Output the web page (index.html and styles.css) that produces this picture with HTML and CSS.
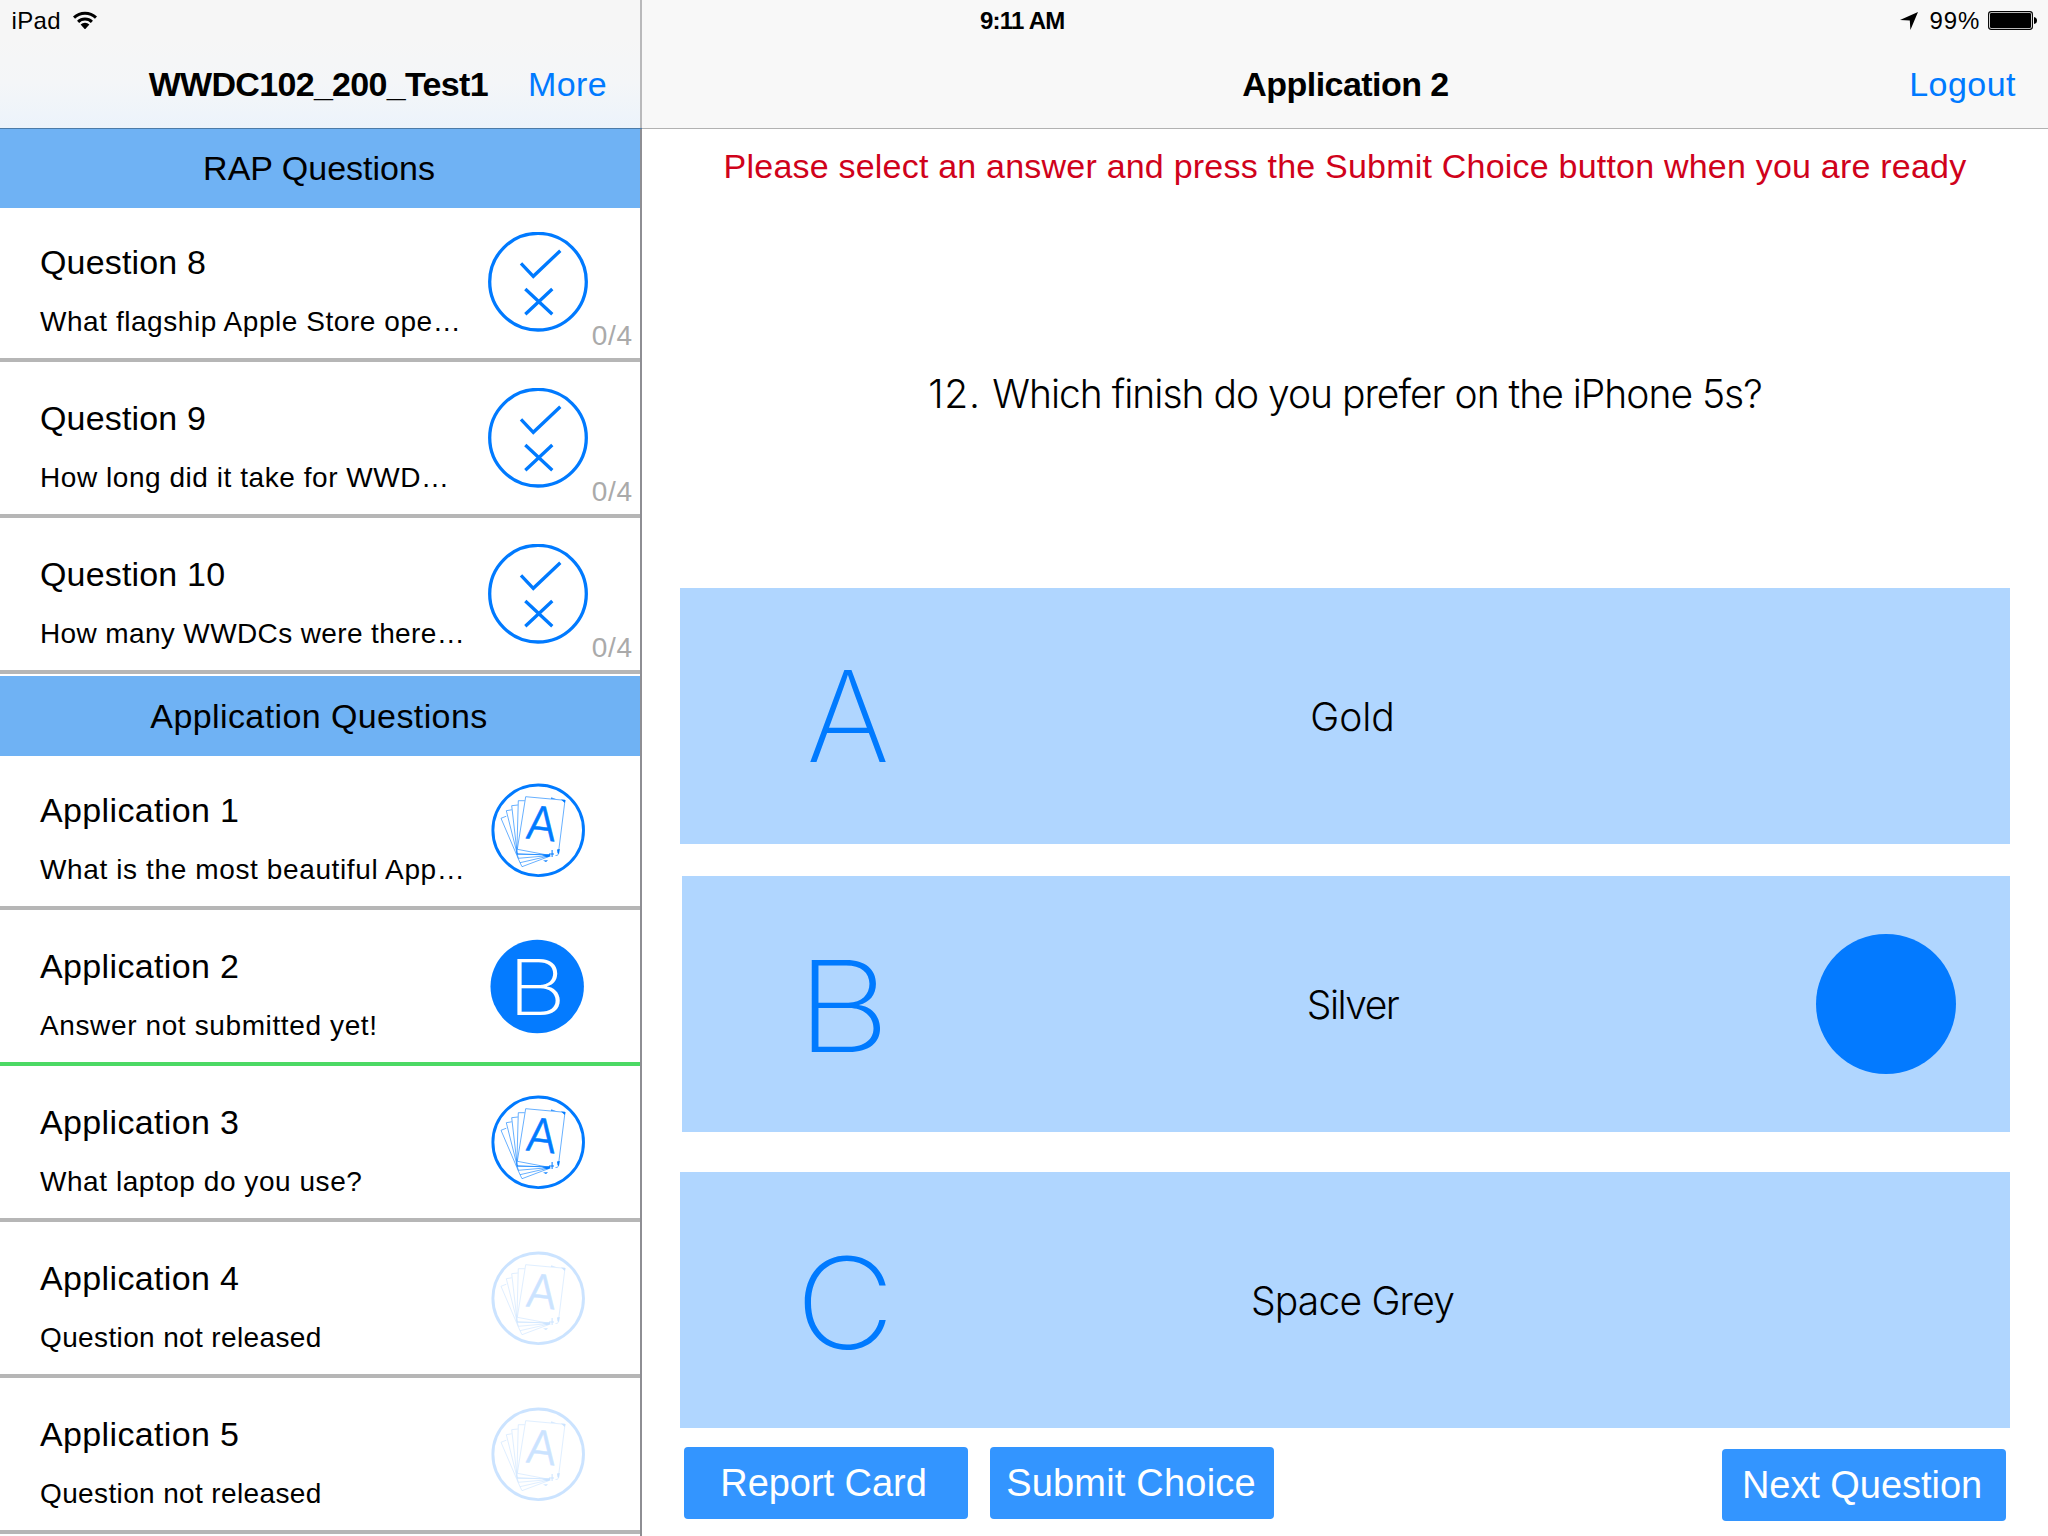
FILE: index.html
```html
<!DOCTYPE html>
<html lang="en">
<head>
<meta charset="utf-8">
<title>Application 2</title>
<link rel="stylesheet" href="styles.css">
</head>
<body>
<svg class="symbols" aria-hidden="true">
  <symbol id="check-cross" viewBox="0 0 100 100">
    <g fill="none" stroke="#007aff" stroke-width="3.3">
      <circle cx="50" cy="49.7" r="48.3"/>
      <path d="M33 31.3 45.3 44.3 72.3 18.7M37.3 57 64.3 82.3M64.3 57 37.3 82.3"/>
    </g>
  </symbol>
  <symbol id="cards" viewBox="0 0 100 100">
    <circle cx="50.2" cy="50.3" r="45.3" fill="none" stroke="#007aff" stroke-width="2.9"/>
    <g fill="none" stroke="#007aff" stroke-width=".6">
      <path d="M29.3 69.3 37.7 16.7 77 20.3 70.3 74Q70 76 67.5 75.5M29.3 69.3 61 75.3"/>
      <path d="M36.7 20.7H30.3L28.8 73.5 61 75.3"/>
      <path d="M29.8 25 23.7 25.7 29.3 74.5H61"/>
      <path d="M23.7 29.8 18.3 30.7 30.3 78.3 61 75.6"/>
      <path d="M18.3 36.2 13 38.3 32 82.7 61 76"/>
      <path d="M32 82.7 34 86.7 61 76.5"/>
    </g>
    <path d="M54 75.5 62 74.5 62.5 76.5 59 77.2ZM55 80.5 60 80.3 58 82ZM69 69.5 71.8 69 71 74 69.5 73ZM63.6 70H64.6V77H63.6ZM61 73.5H66V74.5H61ZM63 17.5 68 18.5 63 18.8ZM73 19.5 77.5 20 76.8 23Z" fill="#007aff"/>
    <text class="cards-letter" x="52" y="59.8" text-anchor="middle" transform="rotate(6.5 52 59.8)">A</text>
  </symbol>
</svg>
<div class="app">
  <aside class="sidebar">
    <header class="bar bar-side">
      <div class="status">
        <span class="carrier">iPad</span>
        <svg class="wifi" viewBox="0 0 24 18.4"><g fill="none" stroke="#000" stroke-width="3"><path d="M1 6.6A15.8 15.8 0 0 1 23 6.6"/><path d="M5.1 10.9A9.8 9.8 0 0 1 18.9 10.9"/></g><path d="M7.6 13.6A6.2 6.2 0 0 1 16.4 13.6L12 18.4Z"/></svg>
      </div>
      <div class="nav nav-side"><h1 class="title title-test">WWDC102_200_Test1</h1><a class="link more">More</a></div>
    </header>
    <h2 class="section rap">RAP Questions</h2>
    <ul class="rows">
      <li class="row"><div class="text"><h3 class="name q">Question 8</h3><p class="sub">What flagship Apple Store ope…</p></div><svg class="icon"><use href="#check-cross"/></svg><span class="count">0/4</span></li>
      <li class="row"><div class="text"><h3 class="name q">Question 9</h3><p class="sub">How long did it take for WWD…</p></div><svg class="icon"><use href="#check-cross"/></svg><span class="count">0/4</span></li>
      <li class="row"><div class="text"><h3 class="name q">Question 10</h3><p class="sub tight">How many WWDCs were there…</p></div><svg class="icon"><use href="#check-cross"/></svg><span class="count">0/4</span></li>
    </ul>
    <h2 class="section">Application Questions</h2>
    <ul class="rows">
      <li class="row"><div class="text"><h3 class="name">Application 1</h3><p class="sub loose">What is the most beautiful App…</p></div><svg class="icon"><use href="#cards"/></svg></li>
      <li class="row current"><div class="text"><h3 class="name">Application 2</h3><p class="sub loose">Answer not submitted yet!</p></div><svg class="icon" viewBox="0 0 100 100"><circle cx="49.2" cy="50.5" r="46.7" fill="#047bff"/><text class="badge-letter" transform="translate(20 78.5) scale(1.17 1)">B</text></svg></li>
      <li class="row"><div class="text"><h3 class="name">Application 3</h3><p class="sub">What laptop do you use?</p></div><svg class="icon"><use href="#cards"/></svg></li>
      <li class="row"><div class="text"><h3 class="name">Application 4</h3><p class="sub tight">Question not released</p></div><svg class="icon dim"><use href="#cards"/></svg></li>
      <li class="row"><div class="text"><h3 class="name">Application 5</h3><p class="sub tight">Question not released</p></div><svg class="icon dim"><use href="#cards"/></svg></li>
    </ul>
  </aside>
  <main class="detail">
    <header class="bar bar-detail">
      <div class="status status-detail">
        <span class="time">9:11 AM</span>
        <span class="power">
          <svg class="arrow" viewBox="0 0 18 18"><path d="M18 0 10.4 18 9.8 8.6 0 8Z"/></svg>
          <span class="percent">99%</span>
          <svg class="battery" viewBox="0 0 49 19"><rect x=".6" y=".6" width="43.8" height="17.8" rx="2.6" fill="none" stroke="#000" stroke-width="1.1"/><rect x="2" y="2" width="41" height="15" rx="1.2"/><path d="M46 6Q49 6.5 49 9.5T46 13Z"/></svg>
        </span>
      </div>
      <div class="nav nav-detail"><h1 class="title title-app">Application 2</h1><a class="link logout">Logout</a></div>
    </header>
    <p class="hint">Please select an answer and press the Submit Choice button when you are ready</p>
    <p class="question"><span class="number">12. </span>Which finish do you prefer on the iPhone 5s?</p>
    <div class="options">
      <div class="option option-a"><span class="letter">A</span><span class="answer">Gold</span></div>
      <div class="option option-b"><span class="letter">B</span><span class="answer">Silver</span><span class="dot"></span></div>
      <div class="option option-c"><span class="letter">C</span><span class="answer">Space Grey</span></div>
    </div>
    <footer class="actions">
      <button class="btn">Report Card</button>
      <button class="btn submit">Submit Choice</button>
      <button class="btn next">Next Question</button>
    </footer>
  </main>
</div>
</body>
</html>
```
FILE: styles.css
```css
* { box-sizing: border-box; margin: 0; padding: 0; }
body {
  width: 2048px;
  height: 1536px;
  overflow: hidden;
  background: #fff;
  color: #000;
  font-family: "Liberation Sans", Arial, sans-serif;
}
ul { list-style: none; }
h1, h2, h3 { font-weight: 400; }
.symbols { display: none; }
.app { display: grid; grid-template-columns: 642px 1406px; height: 1536px; }

/* Top bars */
.bar { height: 128px; position: relative; }
.bar-side {
  background: linear-gradient(#f6f6f6 30%, #f4f6f8 65%, #ecf3fb);
  box-shadow: 0 1px 0 #4c7ba8;
}
.bar-detail { background: #f8f8f8; box-shadow: 0 1px 0 #b2b2b2; }
.bar-side::after {
  content: "";
  position: absolute;
  top: 0;
  left: 640px;
  width: 2px;
  height: 128px;
  background: #b9b9bb;
}
.status {
  display: flex;
  align-items: flex-start;
  height: 40px;
  padding-left: 11.6px;
  font-size: 24px;
  line-height: 41px;
}
.carrier { width: 52.1px; letter-spacing: .3px; }
.wifi { width: 24px; height: 18.4px; margin: 11px 0 0 9px; }
.status-detail { padding: 0 11px 0 338px; justify-content: space-between; }
.time { font-weight: 700; letter-spacing: -.75px; }
.power { display: flex; align-items: flex-start; }
.arrow { width: 18px; height: 18px; margin: 12px 11.6px 0 0; }
.percent { width: 51.8px; letter-spacing: .9px; }
.battery { width: 49px; height: 19px; margin: 11px 0 0 6.6px; }
.nav { height: 88px; font-size: 34px; line-height: 88px; white-space: nowrap; }
.nav-side { display: flex; justify-content: flex-end; gap: 40px; padding-right: 34.8px; }
.nav-detail { display: grid; grid-template-columns: 1fr auto 1fr; padding: 0 32px 0 33px; }
.title { font-size: 34px; font-weight: 700; }
.title-test { letter-spacing: -.68px; }
.title-app { grid-column: 2; letter-spacing: -.55px; }
.link { color: #007aff; }
.more { letter-spacing: .45px; }
.logout { justify-self: end; letter-spacing: .47px; }

/* Question list */
.sidebar { border-right: 2px solid #8e8e93; }
.sidebar .bar { width: 642px; }
.section {
  height: 80px;
  padding-right: 2px;
  background: #6fb2f4;
  font-size: 34px;
  line-height: 80px;
  text-align: center;
  letter-spacing: .4px;
}
.rap { letter-spacing: 0; }
.row {
  display: grid;
  grid-template-columns: 448px 100px 1fr;
  height: 154px;
  margin-bottom: 2px;
  padding-left: 40px;
  border-bottom: 4px solid #b6b6b6;
}
.current { border-bottom-color: #4cd964; }
.text { padding-top: 34px; white-space: nowrap; }
.name { font-size: 34px; line-height: 40px; letter-spacing: .36px; }
.q { letter-spacing: .17px; }
.sub { margin-top: 22px; font-size: 28px; line-height: 36px; letter-spacing: .55px; }
.tight { letter-spacing: .37px; }
.loose { letter-spacing: .62px; }
.icon { width: 100px; height: 100px; margin-top: 24px; }
.dim { opacity: .2; }
.cards-letter { font: 300 46px Inter, sans-serif; fill: #007aff; stroke: #007aff; stroke-width: .6px; }
.badge-letter { font: 200 77px Inter, sans-serif; fill: #fff; }
.count {
  align-self: end;
  margin-bottom: 4px;
  padding-left: 3.8px;
  color: #aaa;
  font-size: 28px;
  line-height: 36px;
  letter-spacing: .7px;
}

/* Current question */
.hint {
  height: 76px;
  color: #d0021b;
  font-size: 34px;
  line-height: 76px;
  text-align: center;
  letter-spacing: .21px;
}
.question {
  height: 384px;
  font: 300 39px/380px Inter, sans-serif;
  letter-spacing: -1px;
  text-align: center;
}
.number { letter-spacing: .7px; }
.options { padding: 0 38px; }
.option {
  display: grid;
  grid-template-columns: 336px 673px 1fr;
  align-items: center;
  height: 256px;
  background: #b0d6ff;
  font-family: Inter, sans-serif;
  text-align: center;
}
.option-b { grid-template-columns: 334px 673px 1fr; margin: 32px 0 40px 2px; }
.letter { color: #007aff; font-size: 126.5px; font-weight: 200; line-height: 160px; }
.option-b .letter { transform: translate(-5.5px, 2px) scaleX(1.15); }
.option-c .letter { transform: translate(-3px, 2.5px) scaleX(1.08); }
.answer { font-size: 39px; font-weight: 300; letter-spacing: -.8px; }
.option-a .answer { letter-spacing: 0; }
.option-b .answer { letter-spacing: -1.5px; }
.dot { justify-self: end; width: 140px; height: 140px; margin-right: 54px; border-radius: 50%; background: #037aff; }
.actions { display: flex; gap: 22px; padding: 19px 42px 0; }
.btn {
  width: 284px;
  height: 72px;
  padding-right: 5px;
  border: 0;
  border-radius: 4px;
  background: #3395ff;
  color: #fff;
  font: 38px/72px "Liberation Sans", Arial, sans-serif;
  letter-spacing: -.05px;
  white-space: nowrap;
}
.submit { padding-right: 2px; letter-spacing: .2px; }
.next { margin: 2px 0 0 auto; padding-right: 4px; }
```
